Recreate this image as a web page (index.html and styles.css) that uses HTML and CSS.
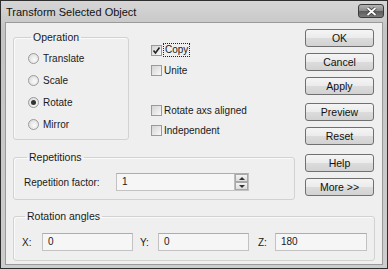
FILE: index.html
```html
<!DOCTYPE html>
<html lang="en">
<head>
    <meta charset="UTF-8">
    <title>Transform Selected Object</title>
    <link rel="stylesheet" href="styles.css">
</head>
<body>
    <div class="window">
        <div class="titlebar">
            <span class="title">Transform Selected Object</span>
            <button class="close">
                <svg width="11" height="9" viewBox="0 0 11 9"><path d="M1.5 1 L9.5 8 M9.5 1 L1.5 8" stroke="#3a3a3a" stroke-width="3.4"/><path d="M1.5 1 L9.5 8 M9.5 1 L1.5 8" stroke="#fff" stroke-width="1.8"/></svg>
            </button>
        </div>

        <div class="client">
            <div class="main">
                <div class="left">
                    <div class="top-row">
                        <!-- Operation group -->
                        <fieldset class="group operation">
                            <legend>Operation</legend>
                            <label class="radio-row"><span class="radio"></span>Translate</label>
                            <label class="radio-row"><span class="radio"></span>Scale</label>
                            <label class="radio-row"><span class="radio checked"></span>Rotate</label>
                            <label class="radio-row"><span class="radio"></span>Mirror</label>
                        </fieldset>

                        <div class="options">
                            <label class="check-row"><span class="check checked"><svg width="9" height="9" viewBox="0 0 9 9"><path d="M1.5 4.5 L3.5 7 L7.5 1.5" stroke="#222" stroke-width="1.6" fill="none"/></svg></span><span class="focus">Copy</span></label>
                            <label class="check-row"><span class="check"></span>Unite</label>
                            <label class="check-row spaced"><span class="check"></span>Rotate axs aligned</label>
                            <label class="check-row"><span class="check"></span>Independent</label>
                        </div>
                    </div>

                    <!-- Repetitions group -->
                    <fieldset class="group repetitions">
                        <legend>Repetitions</legend>
                        <div class="field-row">
                            <span class="rep-label">Repetition factor:</span>
                            <div class="input spin-input">
                                <span class="value">1</span>
                                <div class="spinner">
                                    <span class="spin up"></span>
                                    <span class="spin down"></span>
                                </div>
                            </div>
                        </div>
                    </fieldset>
                </div>

                <div class="buttons">
                    <button class="btn">OK</button>
                    <button class="btn">Cancel</button>
                    <button class="btn">Apply</button>
                    <button class="btn gap">Preview</button>
                    <button class="btn">Reset</button>
                    <button class="btn gap2">Help</button>
                    <button class="btn">More &gt;&gt;</button>
                </div>
            </div>

            <!-- Rotation angles group -->
            <fieldset class="group rotation">
                <legend>Rotation angles</legend>
                <div class="field-row">
                    <span class="axis x">X:</span>
                    <div class="input angle">0</div>
                    <span class="axis y">Y:</span>
                    <div class="input angle">0</div>
                    <span class="axis z">Z:</span>
                    <div class="input angle wide">180</div>
                </div>
            </fieldset>
        </div>
    </div>
</body>
</html>
```

FILE: styles.css
```css
body {
    margin: 0;
    font-family: "Liberation Sans", Arial, sans-serif;
    font-size: 10px;
    color: #1a1a1a;
    background: #fff;
}

.window {
    width: 388px;
    height: 269px;
    box-sizing: border-box;
    border: 1px solid #2e2e2e;
    background: linear-gradient(#d6d6d6, #c4c4c4 30px, #cdcdcd);
    padding: 0 4px 3px 4px;
    display: flex;
    flex-direction: column;
}

.titlebar {
    height: 21px;
    display: flex;
    align-items: flex-start;
    justify-content: space-between;
}

.title {
    font-size: 11px;
    line-height: 12px;
    margin: 5px 0 0 1px;
    color: #111;
}

.close {
    width: 26px;
    height: 14px;
    margin: 3px -1px 0 0;
    padding: 0;
    border: 1px solid #3c3c3c;
    border-radius: 3px;
    background: linear-gradient(#b4b4b4, #8a8a8a 50%, #5a5a5a 51%, #7a7a7a);
    display: flex;
    align-items: center;
    justify-content: center;
}

.client {
    flex: 1;
    background: #efefef;
    border: 1px solid #9a9a9a;
    padding: 6px 6px 0 7px;
}

.main {
    display: flex;
}

.left {
    width: 282px;
}

.top-row {
    display: flex;
}

.group {
    margin: 0;
    border: 1px solid #d2d2d2;
    border-radius: 3px;
    box-shadow: inset 1px 1px 0 #fafafa;
}

.group legend {
    font-size: 10.5px;
    line-height: 12px;
    padding: 0 2px;
    margin-left: 3px;
}

.operation {
    width: 116px;
    box-sizing: border-box;
    margin-top: 2px;
    padding: 4px 0 1px 14px;
}

.radio-row {
    height: 22px;
    display: flex;
    align-items: center;
}

.radio {
    width: 9px;
    height: 9px;
    border: 1px solid #9a9a9a;
    border-radius: 50%;
    background: radial-gradient(circle at 60% 60%, #fbfbfb, #d6d6d6);
    margin-right: 4px;
    display: flex;
    align-items: center;
    justify-content: center;
}

.radio.checked::after {
    content: "";
    width: 5px;
    height: 5px;
    border-radius: 50%;
    background: #333;
}

.options {
    margin-left: 22px;
    padding-top: 11px;
}

.check-row {
    height: 20px;
    display: flex;
    align-items: center;
}

.check-row.spaced {
    margin-top: 20px;
}

.check {
    width: 9px;
    height: 9px;
    border: 1px solid #9a9a9a;
    background: linear-gradient(135deg, #d4d4d4, #f8f8f8);
    margin-right: 2px;
    display: flex;
    align-items: center;
    justify-content: center;
}

.focus {
    outline: 1px dotted #222;
    padding: 0 1px;
    line-height: 12px;
}

.repetitions {
    width: 282px;
    box-sizing: border-box;
    margin-top: 11px;
    padding: 10px 0 8px 10px;
}

.field-row {
    display: flex;
    align-items: center;
}

.rep-label {
    width: 92px;
}

.input {
    height: 18px;
    box-sizing: border-box;
    border: 1px solid #c2c2c2;
    border-top-color: #adadad;
    background: #f6f6f6;
    padding-left: 5px;
    line-height: 16px;
}

.spin-input {
    width: 133px;
    display: flex;
    justify-content: space-between;
    padding-right: 0;
}

.spinner {
    width: 13px;
    display: flex;
    flex-direction: column;
    border-left: 1px solid #bdbdbd;
}

.spin {
    flex: 1;
    border: 1px solid #a8a8a8;
    background: linear-gradient(#f4f4f4, #dcdcdc);
    display: flex;
    align-items: center;
    justify-content: center;
}

.spin::after {
    content: "";
    border-left: 3px solid transparent;
    border-right: 3px solid transparent;
}

.spin.up::after {
    border-bottom: 3px solid #333;
}

.spin.down::after {
    border-top: 3px solid #333;
}

.buttons {
    margin-left: 10px;
    width: 69px;
    display: flex;
    flex-direction: column;
}

.btn {
    height: 18px;
    margin-bottom: 6px;
    padding: 0;
    font-family: inherit;
    font-size: 10.5px;
    color: #111;
    border: 1px solid #707070;
    border-radius: 3px;
    background: linear-gradient(#f5f5f5, #ebebeb 50%, #dcdcdc 51%, #d2d2d2);
}

.btn.gap {
    margin-top: 2px;
}

.btn.gap2 {
    margin-top: 3px;
}

.rotation {
    width: 362px;
    box-sizing: border-box;
    margin-top: 8px;
    padding: 11px 0 9px 8px;
}

.axis {
    width: 20px;
}

.axis.y {
    margin-left: 7px;
    width: 18px;
}

.axis.z {
    margin-left: 9px;
    width: 17px;
}

.angle {
    width: 91px;
}

.angle.wide {
    width: 92px;
}
```
